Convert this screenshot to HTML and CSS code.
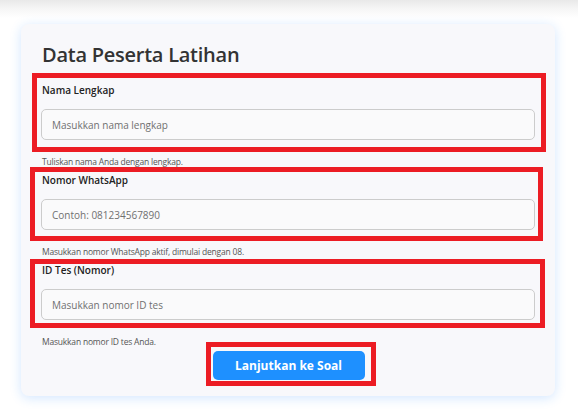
FILE: index.html
```html
<!DOCTYPE html>
<html lang="id">
<head>
<meta charset="utf-8">
<title>Data Peserta Latihan</title>
<link rel="stylesheet" href="styles.css">
</head>
<body>
<div class="top-shade"></div>
<main class="card">
  <h2 class="title">Data Peserta Latihan</h2>
  <form class="form">
    <div class="group group-1">
      <label class="label" for="nama">Nama Lengkap</label>
      <input class="input" id="nama" type="text" placeholder="Masukkan nama lengkap">
      <small class="help">Tuliskan nama Anda dengan lengkap.</small>
    </div>
    <div class="group group-2">
      <label class="label" for="wa">Nomor WhatsApp</label>
      <input class="input" id="wa" type="text" placeholder="Contoh: 081234567890">
      <small class="help">Masukkan nomor WhatsApp aktif, dimulai dengan 08.</small>
    </div>
    <div class="group group-3">
      <label class="label" for="idtes">ID Tes (Nomor)</label>
      <input class="input" id="idtes" type="text" placeholder="Masukkan nomor ID tes">
      <small class="help">Masukkan nomor ID tes Anda.</small>
    </div>
    <div class="actions">
      <button class="btn" type="button">Lanjutkan ke Soal</button>
    </div>
  </form>
</main>
</body>
</html>
```
FILE: styles.css
```css
* { box-sizing: border-box; }

html, body {
  margin: 0;
  padding: 0;
  background: #ffffff;
}

body {
  font-family: "Open Sans", "Noto Sans", "Liberation Sans", sans-serif;
  height: 417px;
  overflow: hidden;
}

.top-shade {
  height: 24px;
  background: linear-gradient(#e9e9e9 0, #f6f6f6 9px, #ffffff 18px);
}

.card {
  margin-left: 21px;
  width: 534px;
  height: 372px;
  padding: 17px 20px 0 21px;
  background: #f8f8fb;
  border-radius: 8px;
  box-shadow: 0 2px 12px rgba(30, 130, 255, 0.2);
}

.title {
  margin: 0 0 15px;
  font-size: 20px;
  line-height: 28px;
  font-weight: 600;
  letter-spacing: -0.25px;
  color: #333333;
}

.form {
  display: flex;
  flex-direction: column;
}

.group {
  position: relative;
  display: flex;
  flex-direction: column;
  margin-bottom: 6px;
}

.group::after {
  content: "";
  position: absolute;
  border: 5px solid #ec1c24;
  pointer-events: none;
}

.group-1::after { left: -10px; right: -11px; top: -11px; bottom: 16px; }
.group-2::after { left: -12px; right: -8px; top: -7px; bottom: 17px; }
.group-3::after { left: -12px; right: -10px; top: -5px; bottom: 20px; }

.label {
  font-size: 10px;
  line-height: 13px;
  font-weight: 600;
  color: #222222;
}

.input {
  margin: 12px 0 0 -1px;
  height: 31px;
  width: calc(100% + 1px);
  padding: 0 10px;
  border: 1px solid #cccccc;
  border-radius: 5px;
  background: #fafafb;
  font-family: inherit;
  font-size: 10px;
  color: #333333;
  outline: none;
}

.input::placeholder {
  color: #707070;
}

.help {
  margin-top: 16px;
  font-size: 8.5px;
  line-height: 12px;
  color: #555555;
  letter-spacing: -0.2px;
}

.actions {
  position: relative;
  display: flex;
  justify-content: center;
  margin-top: -3px;
}

.btn {
  position: relative;
  width: 152px;
  height: 29px;
  border: none;
  border-radius: 5px;
  background: #1e90ff;
  color: #ffffff;
  font-family: inherit;
  font-size: 12px;
  font-weight: 700;
  cursor: pointer;
}

.btn::after {
  content: "";
  position: absolute;
  left: -7px;
  right: -11px;
  top: -9px;
  bottom: -6px;
  border: 5px solid #ec1c24;
  pointer-events: none;
}
```
